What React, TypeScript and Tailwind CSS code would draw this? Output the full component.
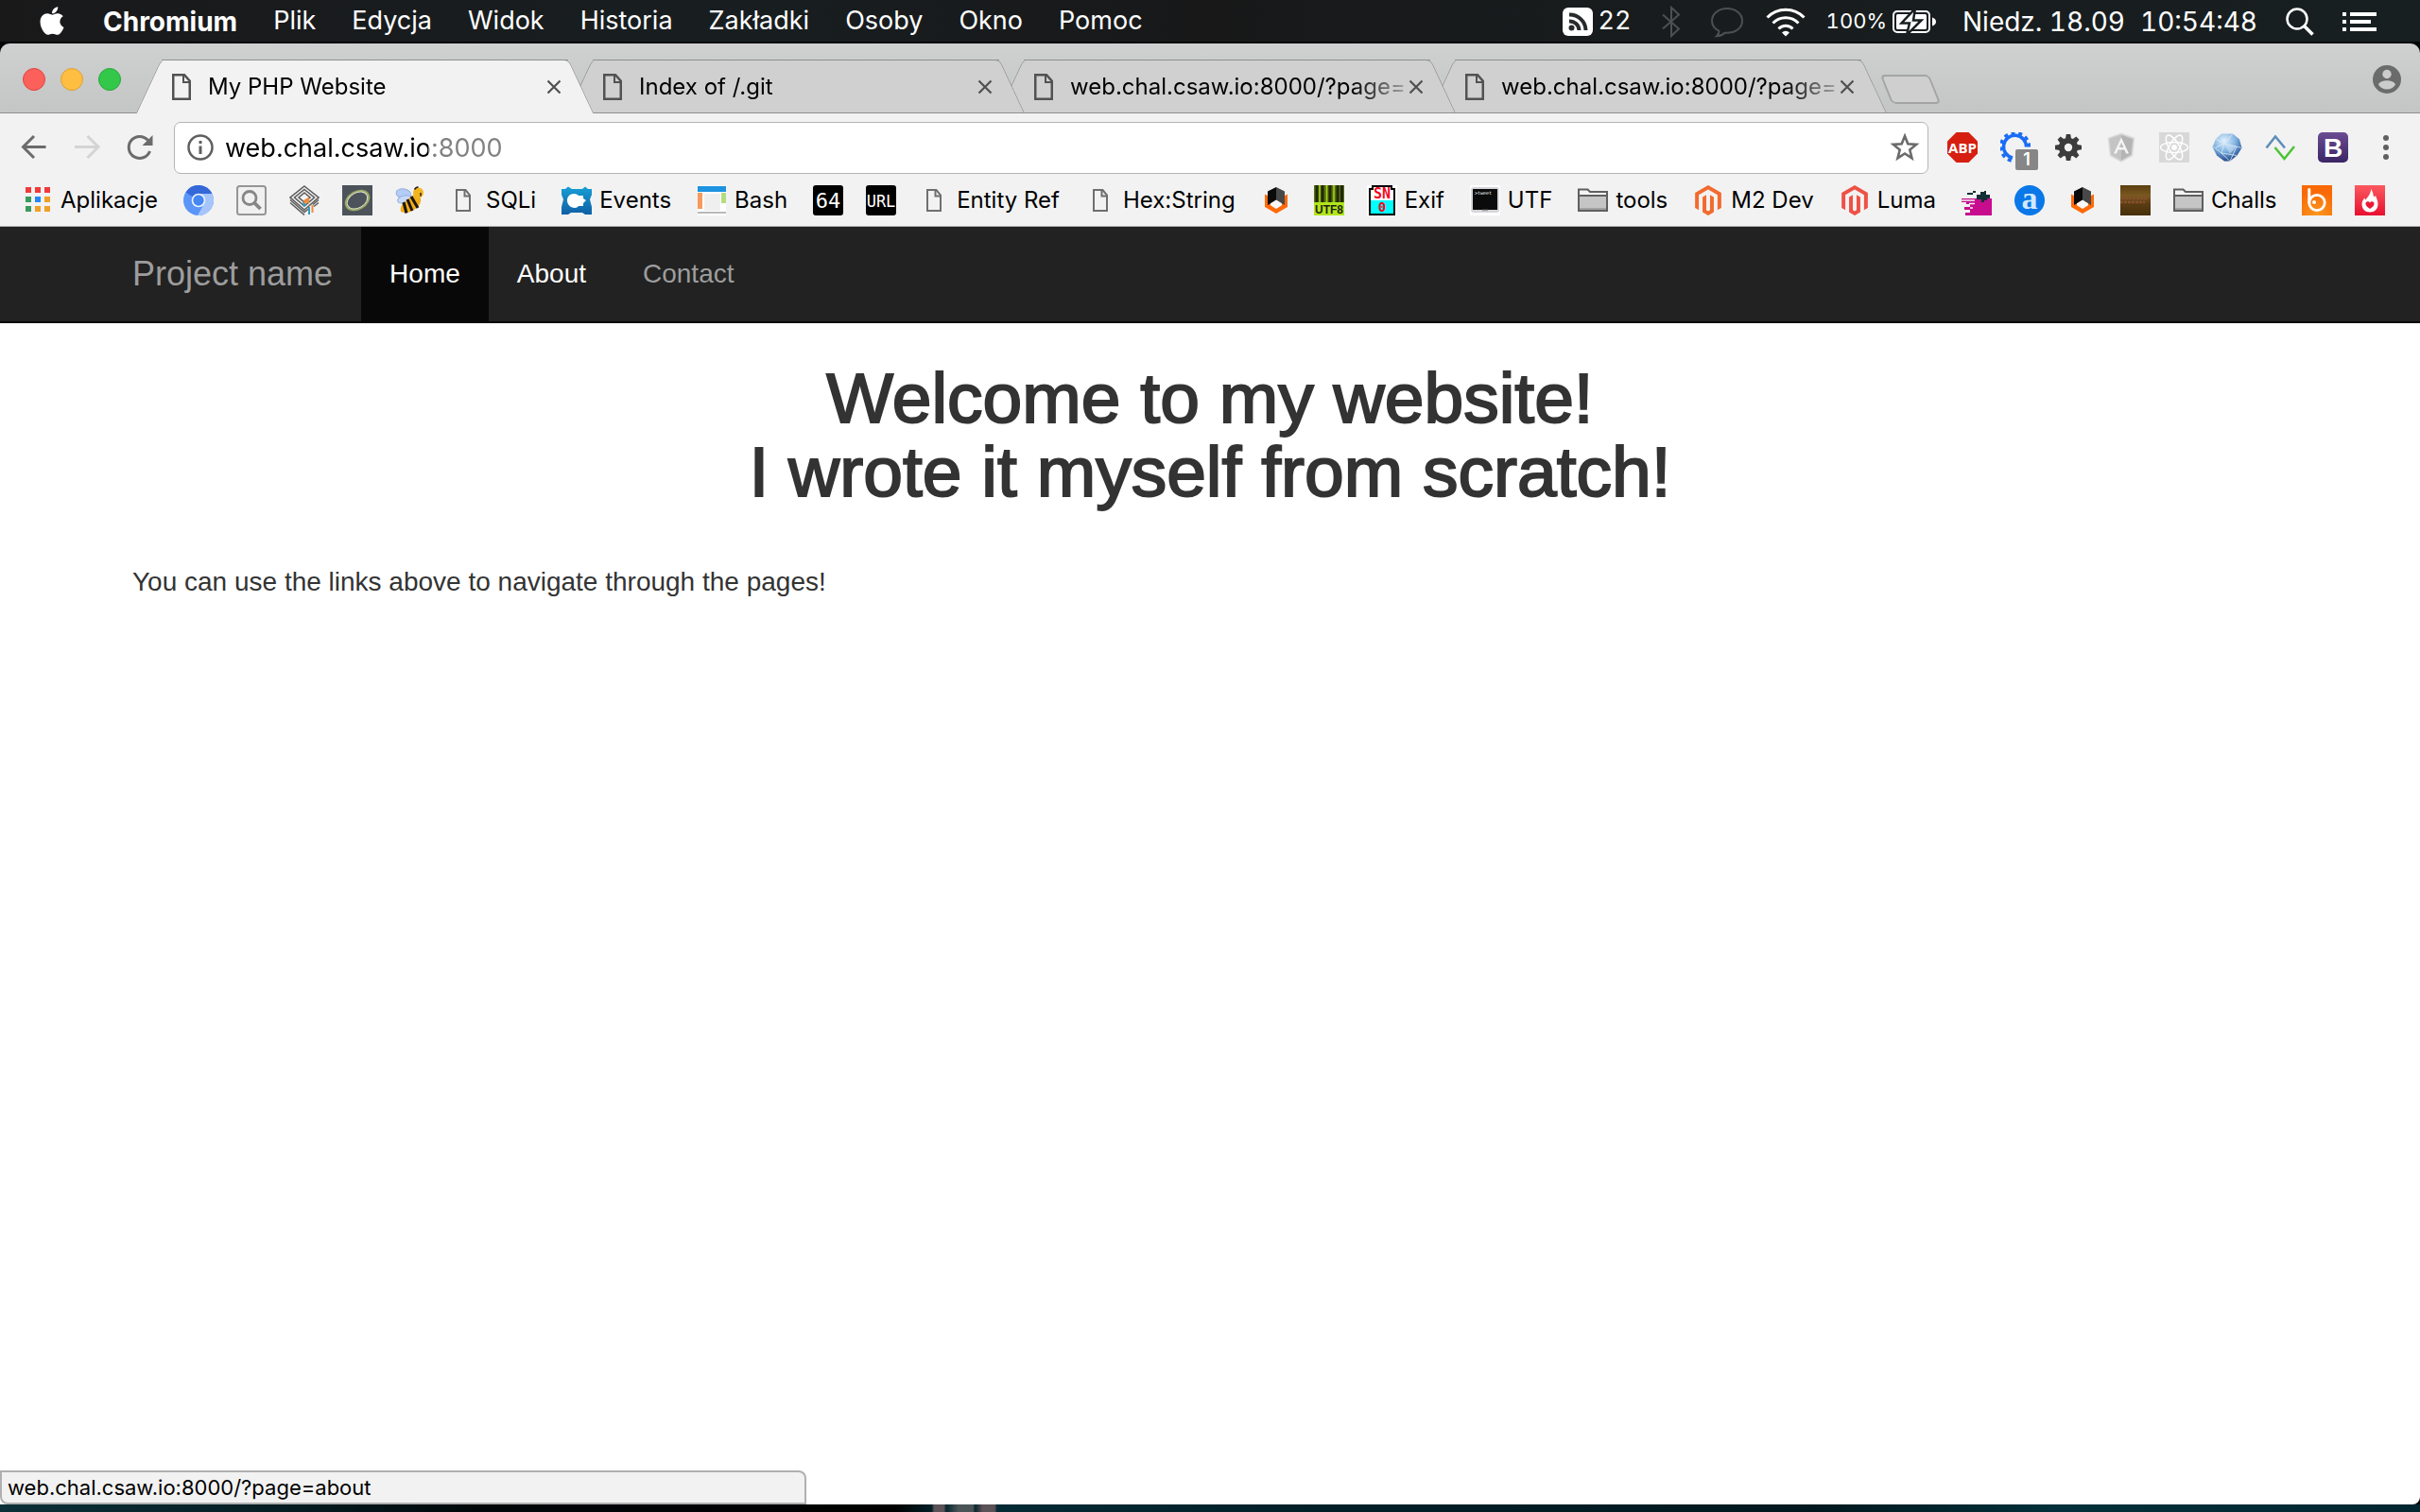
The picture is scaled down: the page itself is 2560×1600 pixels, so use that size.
import type { ReactNode } from "react";
import { FaApple, FaMagento } from "react-icons/fa";

const icon = "block size-8 shrink-0";

function Svg({ children, label }: { children: ReactNode; label?: string }) {
  return (
    <svg viewBox="0 0 32 32" className={icon} role={label ? "img" : undefined} aria-label={label} aria-hidden={label ? undefined : true}>
      {children}
    </svg>
  );
}

/* ---------- menu bar icons ---------- */

const RssIcon = () => (
  <Svg>
    <rect x="0" y="1" width="32" height="30" rx="6" fill="#fff" />
    <g fill="none" stroke="#262b2c" strokeWidth="4">
      <path d="M7 8.500a17 17 0 0 1 17.500 16.500" />
      <path d="M7 15.500a10 10 0 0 1 10.500 9.500" />
    </g>
    <circle cx="9.500" cy="22.500" r="3" fill="#262b2c" />
  </Svg>
);

const BluetoothIcon = () => (
  <svg viewBox="0 0 20 34" className="block h-[34px] w-5 shrink-0" aria-hidden>
    <path d="M1 9.500 18 24.500 10 32V2l8 7.500L1 24.500" fill="none" stroke="#4b5152" strokeWidth="2" />
  </svg>
);

const BubbleIcon = () => (
  <svg viewBox="0 0 34 34" className="block size-[34px] shrink-0" aria-hidden>
    <path
      d="M17 3C8 3 1 8.500 1 16c0 5 3 8.500 7.500 10.800 0 2-1 4-2.500 5.500 3.500-.3 6.500-1.500 8.500-3.600 10.500 1 18.500-4.700 18.500-12.700C33 8.500 26 3 17 3Z"
      fill="none"
      stroke="#4b5152"
      strokeWidth="2"
    />
  </svg>
);

const WifiIcon = () => (
  <svg viewBox="0 0 42 32" className="block h-8 w-[42px] shrink-0" aria-hidden>
    <g fill="none" stroke="#fff" strokeWidth="3">
      <path d="M1.500 11.500a27 27 0 0 1 39 0" />
      <path d="M7.500 17.500a19 19 0 0 1 27 0" />
      <path d="M13.500 23.500a10.500 10.500 0 0 1 15 0" />
    </g>
    <path d="M21 31.500 17 27.500a5.600 5.600 0 0 1 8 0Z" fill="#fff" />
  </svg>
);

const BatteryIcon = () => (
  <svg viewBox="0 0 46 26" className="block h-[26px] w-[46px] shrink-0" aria-hidden>
    <rect x="1" y="2" width="38" height="22" rx="4" fill="none" stroke="#fff" strokeWidth="2" />
    <path d="M42 8.500c2.500.6 4 2.500 4 4.500s-1.500 3.900-4 4.500Z" fill="#fff" />
    <rect x="4" y="5" width="32" height="16" rx="1.500" fill="#fff" />
    <path d="M24-1 9.500 14.500H18L15 27l15.500-15.500H22Z" fill="#fff" stroke="#181f20" strokeWidth="2.500" />
  </svg>
);

const SpotlightIcon = () => (
  <svg viewBox="0 0 30 30" className="block size-[30px] shrink-0" aria-hidden>
    <circle cx="12" cy="12" r="10.500" fill="none" stroke="#fff" strokeWidth="2.500" />
    <path d="m19.500 19.500 9 9" stroke="#fff" strokeWidth="3.500" />
  </svg>
);

const ListIcon = () => (
  <svg viewBox="0 0 36 20" className="block h-5 w-9 shrink-0" aria-hidden>
    <g fill="#fff">
      <rect width="4" height="4" />
      <rect y="8" width="4" height="4" />
      <rect y="16" width="4" height="4" />
      <rect x="8" width="28" height="4" />
      <rect x="8" y="8" width="22" height="4" />
      <rect x="8" y="16" width="28" height="4" />
    </g>
  </svg>
);

/* ---------- browser chrome icons ---------- */

const TabFileIcon = () => (
  <svg viewBox="0 0 20 28" className="block h-7 w-5 shrink-0" aria-hidden>
    <path d="M1.250 1.250H13l5.750 6.500v19H1.250Z" fill="none" stroke="#525252" strokeWidth="2.500" />
    <path d="M12 1v8h7" fill="none" stroke="#525252" strokeWidth="2" />
  </svg>
);

const CloseIcon = () => (
  <svg viewBox="0 0 16 16" className="block size-4" aria-hidden>
    <path d="m1.500 1.500 13 13m0-13-13 13" stroke="#505050" strokeWidth="2.200" />
  </svg>
);

const ArrowIcon = ({ flip }: { flip?: boolean }) => (
  <Svg>
    {flip ? (
      <path d="M3 15.500h24M16.500 4l11.500 11.500L16.500 27" fill="none" stroke="#d4d4d4" strokeWidth="3" />
    ) : (
      <path d="M28.500 15.500h-24M16 4 4.500 15.500 16 27" fill="none" stroke="#6b6b6b" strokeWidth="3" />
    )}
  </Svg>
);

const ReloadIcon = () => (
  <Svg>
    <path d="M26.500 20A11.500 11.500 0 1 1 24.500 8.500" fill="none" stroke="#6b6b6b" strokeWidth="3" />
    <path d="M29.500 3v11h-11Z" fill="#6b6b6b" />
  </Svg>
);

const InfoIcon = () => (
  <svg viewBox="0 0 28 28" className="block size-7 shrink-0" aria-hidden>
    <circle cx="14" cy="14" r="12.500" fill="none" stroke="#5f5f5f" strokeWidth="2.500" />
    <path d="M12.500 7h3v3h-3zM12.500 12.500h3v8.500h-3z" fill="#5f5f5f" />
  </svg>
);

const StarIcon = () => (
  <Svg>
    <path d="m16 4 3.300 8.300 8.900.6-6.900 5.700 2.200 8.700L16 22.500l-7.500 4.800 2.200-8.700-6.900-5.700 8.900-.6Z" fill="none" stroke="#6b6b6b" strokeWidth="2.600" />
  </Svg>
);

const ProfileIcon = () => (
  <svg viewBox="0 0 30 30" className="block size-[30px]" aria-hidden>
    <circle cx="15" cy="15" r="15" fill="#6b6b6b" />
    <circle cx="15" cy="9.500" r="4.700" fill="#cbcccc" />
    <path d="M6 20.500c1-3 5.500-4.300 9-4.300s8 1.300 9 4.300a10.500 10.500 0 0 1-18 0Z" fill="#cbcccc" />
  </svg>
);

/* ---------- extension icons ---------- */

const AbpIcon = () => (
  <Svg>
    <path d="M9.500 0h13L32 9.500v13L22.500 32h-13L0 22.500v-13Z" fill="#d61f10" />
    <text x="16" y="21.500" textAnchor="middle" fontFamily="Open Sans" fontWeight="700" fontSize="15" fill="#fff">ABP</text>
  </Svg>
);

const BlueGearIcon = () => (
  <Svg>
    <path d="M27.500 15.500A12 12 0 1 0 13 27" fill="none" stroke="#1a6cf5" strokeWidth="3.500" />
    <path d="M30.500 15.500A15 15 0 1 0 13 30.300" fill="none" stroke="#1a6cf5" strokeWidth="3.500" strokeDasharray="4 3.800" />
  </Svg>
);

const DarkGearIcon = () => (
  <Svg>
    <g fill="#3c3c3c">
      {[0, 45, 90, 135, 180, 225, 270, 315].map((a) => (
        <path key={a} d="M12.800 8 13.800 2h4.400l1 6Z" transform={`rotate(${a} 16 16)`} />
      ))}
    </g>
    <circle cx="16" cy="16" r="7.200" fill="none" stroke="#3c3c3c" strokeWidth="6" />
  </Svg>
);

const AngularIcon = () => (
  <Svg>
    <path d="m16 1.500 13.500 4.800-2 18.200L16 31 4.500 24.500l-2-18.200Z" fill="#c4c4c4" stroke="#dadada" strokeWidth="1.500" />
    <path d="m16 3 12 4.300-1.900 16.300L16 29.500Z" fill="#b4b4b4" />
    <path d="m16 5.500-8 17h3l1.600-4h6.800l1.600 4h3Zm0 5.500 2.400 5h-4.800Z" fill="#f4f4f4" />
  </Svg>
);

const ReactIcon = () => (
  <Svg>
    <rect width="32" height="32" fill="#d8d8d8" />
    <g fill="none" stroke="#fff" strokeWidth="1.500">
      {[0, 60, 120].map((a) => (
        <ellipse key={a} cx="16" cy="16" rx="14.500" ry="5.500" transform={`rotate(${a} 16 16)`} />
      ))}
    </g>
    <circle cx="16" cy="16" r="3" fill="#fff" />
  </Svg>
);

const CrystalIcon = () => (
  <Svg>
    <defs>
      <radialGradient id="crystal" cx="0.400" cy="0.250" r="0.800">
        <stop offset="0" stopColor="#e3f1fc" />
        <stop offset="0.500" stopColor="#7fb2e0" />
        <stop offset="1" stopColor="#14397f" />
      </radialGradient>
    </defs>
    <path d="M10 1.500h12l7 6 2.500 9-5 8L19 30.500h-6l-8-6-4.500-9L4 7Z" fill="url(#crystal)" />
    <path d="m4 7 9 5 9-10.500M13 12l-3 10-9-7m12-3 13 3 5 1.500M13 12 4 16m6 6 9 8.500L26 15M10 22l16 2.500" fill="none" stroke="#dcecfa" strokeWidth="0.800" />
    <path d="m13 12 13 3-7 8Z" fill="#cfe4f7" opacity="0.550" />
  </Svg>
);

const ZigzagIcon = () => (
  <Svg>
    <path d="m1.500 16.500 9.500-12 10 12" fill="none" stroke="#5b8db8" strokeWidth="2.500" />
    <path d="m10.500 16 10 12 10.500-13" fill="none" stroke="#4cc337" strokeWidth="2.500" />
  </Svg>
);

const BootstrapIcon = () => (
  <Svg>
    <defs>
      <linearGradient id="boot" x1="0" y1="0" x2="0" y2="1">
        <stop offset="0" stopColor="#6a4c93" />
        <stop offset="1" stopColor="#3b2564" />
      </linearGradient>
    </defs>
    <rect width="32" height="32" rx="5" fill="url(#boot)" />
    <text x="16" y="26" textAnchor="middle" fontFamily="Liberation Sans" fontWeight="700" fontSize="28" fill="#fff">B</text>
  </Svg>
);

const KebabIcon = () => (
  <Svg>
    <g fill="#606060">
      <circle cx="16" cy="6" r="3" />
      <circle cx="16" cy="16" r="3" />
      <circle cx="16" cy="26" r="3" />
    </g>
  </Svg>
);

/* ---------- bookmark icons ---------- */

const AppsIcon = () => (
  <Svg>
    {[
      ["#f23a3a", "#f23a3a", "#f23a3a"],
      ["#3a9b5c", "#2389f5", "#f0a028"],
      ["#3a9b5c", "#f0a028", "#f0a028"],
    ].map((row, y) => row.map((c, x) => <rect key={`${x}${y}`} x={3 + x * 10} y={2 + y * 10} width="6" height="6" fill={c} />))}
  </Svg>
);

const ChromiumIcon = () => (
  <Svg>
    <circle cx="16" cy="16" r="16" fill="#5b95f7" />
    <path d="M16 16 2.500 7.500a16 16 0 0 1 28.200 2.200L16 9Z" fill="#3468d8" />
    <path d="M16 9h14.400A16 16 0 0 1 15 32l7-12.500Z" fill="#a6c5fb" />
    <circle cx="16" cy="16" r="7.300" fill="#eef4fe" />
    <circle cx="16" cy="16" r="5.700" fill="#4587f3" />
  </Svg>
);

const SearchBoxIcon = () => (
  <Svg>
    <rect x="1" y="1" width="30" height="30" rx="2.500" fill="#f0f0f0" stroke="#959595" strokeWidth="2" />
    <circle cx="14" cy="13.500" r="7" fill="none" stroke="#858585" strokeWidth="2.800" />
    <path d="m19 18.500 6.500 6.500" stroke="#858585" strokeWidth="3.800" />
  </Svg>
);

const LayersIcon = () => (
  <Svg>
    <g fill="none" stroke="#5d5d5d" strokeWidth="1.600">
      <path d="M16 1 31 13 16 26 1 13Z" />
      <path d="M16 4.500 26.500 13 16 22 5.500 13Z" />
      <path d="M16 8 22 13l-6 5-6-5Z" />
      <path d="M1 15.500 16 28.500l5-4M1 18.500 16 31.500M31 15.500l-6 5M31 18.500l-5 4" />
    </g>
    <path d="m15 16 6-3.500v7.500l-2-2-3 3Z" fill="#f08a3c" />
    <path d="m14 17 4 4-3 2Z" fill="#2d9fc0" />
    <path d="M21 23v8" stroke="#2d9fc0" strokeWidth="2" />
    <path d="M24.500 21v8" stroke="#f08a3c" strokeWidth="2" />
  </Svg>
);

const RingIcon = () => (
  <Svg>
    <rect width="32" height="32" fill="#4d535a" />
    <g fill="none" transform="rotate(-30 16 16)">
      <ellipse cx="16" cy="16" rx="13" ry="9" stroke="#9aa868" strokeWidth="2.200" />
      <ellipse cx="16" cy="16" rx="11.500" ry="8" stroke="#dfe3cf" strokeWidth="0.900" />
    </g>
  </Svg>
);

const BeeIcon = () => (
  <Svg>
    <ellipse cx="9" cy="9" rx="8" ry="5" fill="#b3cdf8" stroke="#93aede" transform="rotate(12 9 9)" />
    <ellipse cx="10" cy="15" rx="7.500" ry="4" fill="#c6daf9" stroke="#93aede" transform="rotate(-12 10 15)" />
    <path d="M17 12c3-3 8-2 10 2 1 4-2 9-7 12-4 3-10 4-14 2-1-4 1-8 4-10Z" fill="#efad1d" />
    <path d="m17 12 7 12M13 15l5 12M9 18l3 11.500" stroke="#1d1608" strokeWidth="3" />
    <circle cx="24.500" cy="8" r="5.500" fill="#f3b51f" />
    <path d="M20.500 4.500c2-3 3.500-2.500 4-2M27 8v3.500" fill="none" stroke="#2a1f0a" strokeWidth="1.500" />
  </Svg>
);

const FileIcon = () => (
  <Svg>
    <path d="M5 5h9.500L19 10.500V27H5Z" fill="none" stroke="#6f6f6f" strokeWidth="2" transform="translate(4 0)" />
    <path d="M17.500 5v6.500H23" fill="none" stroke="#6f6f6f" strokeWidth="2" />
  </Svg>
);

const EventsIcon = () => (
  <Svg>
    <defs>
      <linearGradient id="events" x1="0" y1="0" x2="0" y2="1">
        <stop offset="0" stopColor="#179fd6" />
        <stop offset="1" stopColor="#0f5fa5" />
      </linearGradient>
    </defs>
    <path d="M0 4h4l3-2.500L11 4h11l3-2.500L28 4h4v6l-2 5 2 8v8h-7l-3-2H10l-3 2H0v-8l2-8-2-5Z" fill="url(#events)" />
    <path d="M6 16c0-4 3-7 7-7 3 0 4 1 5 2h5v3l3 2-3 3v3h-5c-1 1-2 2-4 2-5 0-8-4-8-8Z" fill="#fff" />
  </Svg>
);

const BashIcon = () => (
  <Svg>
    <rect x="1" width="30" height="32" fill="#fff" />
    <rect x="1" y="1" width="30" height="6" fill="#1e93e0" />
    <rect x="1" y="8" width="5" height="17" fill="#f79a5e" />
    <rect x="8" y="9" width="17" height="18" fill="#efefef" />
    <rect x="26" y="8" width="5" height="11" fill="#b5dc80" />
    <rect x="1" y="28" width="30" height="2" fill="#b9b9b9" />
  </Svg>
);

const Base64Icon = () => (
  <Svg>
    <rect width="32" height="32" rx="3" fill="#000" />
    <text x="16" y="24" textAnchor="middle" fontFamily="DejaVu Sans Mono" fontSize="22" fill="#fff">64</text>
  </Svg>
);

const UrlIcon = () => (
  <Svg>
    <rect width="32" height="32" rx="3" fill="#000" />
    <text x="16" y="22.500" textAnchor="middle" fontFamily="DejaVu Sans Mono" fontSize="17" fill="#fff">URL</text>
  </Svg>
);

const CubeIcon = () => (
  <Svg>
    <path d="M4 9.500 16 16l12-6.500V23L16 30 4 23Z" fill="#ff6a08" />
    <path d="M7 6.500 16 2v14l-9 5Z" fill="#0a0a0a" />
    <path d="M25 6.500 16 2v14l9 5Z" fill="#484848" />
    <path d="m10 19.300 6-3.800 6 3.800v2L16 25l-6-3.700Z" fill="#f8f8f8" />
  </Svg>
);

const Utf8Icon = () => (
  <Svg>
    <rect width="32" height="32" fill="#b1e51d" />
    <rect width="32" height="18" fill="#59700f" />
    <path d="M3 0v18M9 0v18M17 0v18M25 0v18M29.500 0v18" stroke="#20280a" strokeWidth="3" />
    <path d="M6 0v18M13.500 0v18M21 0v18" stroke="#a4d31b" strokeWidth="1.500" />
    <text x="16" y="29.500" textAnchor="middle" fontFamily="Liberation Sans" fontWeight="700" fontSize="12" fill="#1c230a">UTF8</text>
  </Svg>
);

const SnoIcon = () => (
  <Svg>
    <rect width="32" height="32" fill="#fff" />
    <path d="M3 31V4h3V1h20v3h3v27Z" fill="#fff" stroke="#000" strokeWidth="2" />
    <rect x="4" y="16" width="24" height="14" fill="#0ff" />
    <g textAnchor="middle" fontFamily="DejaVu Sans Mono" fontWeight="700" fill="#f5081c">
      <text x="16" y="14" fontSize="15">SN</text>
      <text x="16" y="28" fontSize="14">0</text>
    </g>
  </Svg>
);

const TerminalIcon = () => (
  <Svg>
    <rect width="32" height="32" fill="#fff" />
    <rect x="1" y="2" width="30" height="27" rx="3" fill="#d5d5da" />
    <rect x="3" y="4" width="26" height="22" fill="#0b0b0b" />
    <path d="M13 26.500h6" stroke="#999" strokeWidth="1.500" />
    <text x="5" y="10" fontFamily="DejaVu Sans Mono" fontSize="5" fill="#fff">&gt;tweet</text>
  </Svg>
);

const FolderIcon = () => (
  <Svg>
    <path d="M1 10V4.500h9.500L13 7h18v3" fill="#f4f4f4" stroke="#5f5f5f" strokeWidth="2" />
    <rect x="1" y="11" width="30" height="16" fill="#c5c5c5" stroke="#5f5f5f" strokeWidth="2" />
    <path d="M2 25h28" stroke="#a3a3a3" strokeWidth="2" />
  </Svg>
);

const MagentoIcon = () => <FaMagento className="block size-8 shrink-0 text-[#f26a2e]" aria-hidden />;
const LumaIcon = () => <FaMagento className="block size-8 shrink-0 text-[#ee5145]" aria-hidden />;

const BerryIcon = () => (
  <Svg>
    <path d="M0 14h32v18H4v-3h5v-3H3v-3h6v-3H5v-2H0Z" fill="#c70d8e" />
    <path d="M0 16h14M8 19.500h6M12 24h-3" stroke="#f2f2f2" strokeWidth="1.500" />
    <path d="M16 10h4V7h4v3h6v4h-3v2h-3v2h-3v-3h-5ZM6 8h6V6h3v2h-3v2H6ZM24 6h2v4h-2Z" fill="#123036" />
  </Svg>
);

const AlphaIcon = () => (
  <Svg>
    <circle cx="16" cy="16" r="16" fill="#0a78e8" />
    <text x="16" y="25" textAnchor="middle" fontFamily="Liberation Serif" fontWeight="700" fontSize="34" fill="#d3e9ff">a</text>
  </Svg>
);

const BrownIcon = () => (
  <Svg>
    <defs>
      <linearGradient id="brown" x1="0" y1="0" x2="0" y2="1">
        <stop offset="0" stopColor="#5d4010" />
        <stop offset="0.350" stopColor="#7a5820" />
        <stop offset="0.600" stopColor="#5c3c14" />
        <stop offset="1" stopColor="#463009" />
      </linearGradient>
    </defs>
    <rect width="32" height="32" fill="url(#brown)" />
    <path d="M1 14h28M0 18h26" stroke="#85502c" strokeWidth="2.500" strokeDasharray="3 1" />
  </Svg>
);

const BitIcon = () => (
  <Svg>
    <defs>
      <radialGradient id="bit" cx="0.500" cy="1" r="0.800">
        <stop offset="0" stopColor="#fa9a20" />
        <stop offset="1" stopColor="#f96a06" />
      </radialGradient>
    </defs>
    <rect width="32" height="32" fill="url(#bit)" />
    <circle cx="16" cy="18.500" r="8.200" fill="none" stroke="#fff" strokeWidth="2.800" />
    <path d="M7.800 18.500v-14" stroke="#fff" strokeWidth="3" strokeLinecap="round" />
    <circle cx="13" cy="18" r="2" fill="#fff" />
  </Svg>
);

const FlameIcon = () => (
  <Svg>
    <defs>
      <linearGradient id="flame" x1="0" y1="0" x2="0" y2="1">
        <stop offset="0" stopColor="#fb5a5f" />
        <stop offset="1" stopColor="#e8102f" />
      </linearGradient>
    </defs>
    <rect width="32" height="32" fill="url(#flame)" />
    <path d="M17 4c3 4 2 6 3.500 8.500L22 11c1 3 2.500 5 2.500 9 0 5-3.500 8.500-8.500 8.500S7.500 25 7.500 20c0-3 1.500-5 3-6.500l1 2C14 12 17.500 8 17 4Z" fill="#fff" />
    <path d="M16 25c-3-2-4.500-3.500-4.500-5.500 0-2.500 3.500-3 4.500-.7 1-2.300 4.500-1.800 4.500.7 0 2-1.500 3.500-4.500 5.500Z" fill="#ea1835" />
  </Svg>
);

/* ---------- data ---------- */

const menus = ["Plik", "Edycja", "Widok", "Historia", "Zakładki", "Osoby", "Okno", "Pomoc"];

const tabs = [
  { id: 1, title: "My PHP Website", layer: "z-20", active: true },
  { id: 2, title: "Index of /.git", layer: "z-[3]" },
  { id: 3, title: "web.chal.csaw.io:8000/?page=", layer: "z-[2]" },
  { id: 4, title: "web.chal.csaw.io:8000/?page=", layer: "z-[1]" },
];

const extensions: [string, () => ReactNode][] = [
  ["Adblock Plus", AbpIcon],
  ["Rules", BlueGearIcon],
  ["Settings", DarkGearIcon],
  ["Angular", AngularIcon],
  ["React", ReactIcon],
  ["Crystal", CrystalIcon],
  ["Zigzag", ZigzagIcon],
  ["Bootstrap", BootstrapIcon],
  ["Menu", KebabIcon],
];

const bookmarks: { Icon: () => ReactNode; label?: string; name?: string }[] = [
  { Icon: AppsIcon, label: "Aplikacje" },
  { Icon: ChromiumIcon, name: "Chromium" },
  { Icon: SearchBoxIcon, name: "Search" },
  { Icon: LayersIcon, name: "Layers" },
  { Icon: RingIcon, name: "Ring" },
  { Icon: BeeIcon, name: "Bee" },
  { Icon: FileIcon, label: "SQLi" },
  { Icon: EventsIcon, label: "Events" },
  { Icon: BashIcon, label: "Bash" },
  { Icon: Base64Icon, name: "Base64" },
  { Icon: UrlIcon, name: "URL" },
  { Icon: FileIcon, label: "Entity Ref" },
  { Icon: FileIcon, label: "Hex:String" },
  { Icon: CubeIcon, name: "Cube" },
  { Icon: Utf8Icon, name: "UTF8" },
  { Icon: SnoIcon, label: "Exif" },
  { Icon: TerminalIcon, label: "UTF" },
  { Icon: FolderIcon, label: "tools" },
  { Icon: MagentoIcon, label: "M2 Dev" },
  { Icon: LumaIcon, label: "Luma" },
  { Icon: BerryIcon, name: "Berry" },
  { Icon: AlphaIcon, name: "Alpha" },
  { Icon: CubeIcon, name: "Cube" },
  { Icon: BrownIcon, name: "Wood" },
  { Icon: FolderIcon, label: "Challs" },
  { Icon: BitIcon, name: "Bit" },
  { Icon: FlameIcon, name: "Flame" },
];

/* ---------- sections ---------- */

function MenuBar() {
  return (
    <header className="flex h-[46px] shrink-0 items-center justify-between border-b-2 border-[#020507] bg-[linear-gradient(to_right,#19191a,#181e20_30%,#181819_50%,#181b1c_60%,#181f21)] pt-px pr-[46px] pl-[38px] text-[27px] whitespace-nowrap text-white">
      <nav className="flex items-center">
        <button aria-label="Apple" className="mr-[37px]">
          <FaApple className="mb-0.5 size-[34px]" />
        </button>
        <button className="text-[28px] font-bold">Chromium</button>
        {menus.map((m) => (
          <button key={m} className="ml-[38px]">{m}</button>
        ))}
      </nav>
      <div className="flex items-center tabular-nums">
        <RssIcon />
        <span className="ml-[6px]">22</span>
        <span className="ml-8"><BluetoothIcon /></span>
        <span className="ml-8"><BubbleIcon /></span>
        <span className="ml-6"><WifiIcon /></span>
        <span className="ml-[22px] text-[22px]">100%</span>
        <span className="ml-[6px]"><BatteryIcon /></span>
        <span className="ml-7 text-[28px]">Niedz. 18.09</span>
        <span className="ml-4 text-[28px]">10:54:48</span>
        <button aria-label="Spotlight" className="ml-[30px]"><SpotlightIcon /></button>
        <button aria-label="Notifications" className="ml-[30px]"><ListIcon /></button>
      </div>
    </header>
  );
}

function Tab({ title, layer, active }: { title: string; layer: string; active?: boolean }) {
  const fill = active ? "bg-[#f2f2f2]" : "bg-[#d0d0d0]";
  return (
    <div className={`relative -mr-7 flex h-[57px] w-[484px] shrink items-center pr-[34px] pl-[38px] ${layer}`}>
      <span className={`absolute inset-y-0 right-10 left-[13px] skew-x-[-25deg] rounded-tl-md border-t border-l border-[#8f8f8f] ${fill}`} />
      <span className={`absolute inset-y-0 right-[13px] left-10 skew-x-[25deg] rounded-tr-md border-t border-r border-[#8f8f8f] ${fill}`} />
      <button className="relative flex min-w-0 flex-1 items-center gap-[18px] text-left text-[24px] text-black">
        <TabFileIcon />
        <span className="flex-1 mask-r-from-[84%] mask-r-to-[104%] whitespace-nowrap">{title}</span>
      </button>
      <button aria-label="Close tab" className="relative ml-2">
        <CloseIcon />
      </button>
    </div>
  );
}

function TabStrip() {
  return (
    <div className="relative isolate flex h-[74px] shrink-0 items-end rounded-t-[10px] bg-[linear-gradient(to_bottom,#cfd0d0,#c4c5c5)] pr-5">
      <div className="flex h-full w-36 shrink-0 items-center gap-4 pt-0.5 pl-6">
        <button aria-label="Close" className="size-6 rounded-full border border-[#e0443e] bg-[#fc605b]" />
        <button aria-label="Minimize" className="size-6 rounded-full border border-[#dea034] bg-[#fdbe41]" />
        <button aria-label="Zoom" className="size-6 rounded-full border border-[#27a83a] bg-[#34c84a]" />
      </div>
      {tabs.map((t) => (
        <Tab key={t.id} title={t.title} layer={t.layer} active={t.active} />
      ))}
      <button aria-label="New tab" className="mb-[10px] ml-[27px] h-[31px] w-[52px] shrink-0 skew-x-[22deg] rounded-[5px] border-2 border-[#a3a4a4] bg-[#cfcfcf]" />
      <button aria-label="Profile" className="mb-[21px] ml-auto">
        <ProfileIcon />
      </button>
      <span className="absolute inset-x-0 bottom-0 z-10 h-px bg-[#8f8f8f]" />
    </div>
  );
}

function Toolbar() {
  return (
    <div className="flex h-[72px] shrink-0 items-center bg-[#f2f2f2] px-5">
      <div className="flex gap-6">
        <button aria-label="Back"><ArrowIcon /></button>
        <button aria-label="Forward" disabled><ArrowIcon flip /></button>
        <button aria-label="Reload"><ReloadIcon /></button>
      </div>
      <div className="mx-5 flex h-[55px] flex-1 items-center gap-3 rounded-[7px] border border-[#b4b4b4] bg-white pr-2 pl-[13px]">
        <InfoIcon />
        <input
          aria-label="Address"
          defaultValue="web.chal.csaw.io:8000"
          className="min-w-0 flex-1 bg-[linear-gradient(to_right,#000_215px,#808080_215px)] bg-clip-text pt-0.5 text-[27px] text-transparent outline-none"
        />
        <button aria-label="Bookmark this page"><StarIcon /></button>
      </div>
      <div className="flex gap-6">
        {extensions.map(([name, Icon]) => (
          <button key={name} aria-label={name} className="relative">
            <Icon />
            {name === "Rules" && (
              <span className="absolute top-[18px] left-4 h-[22px] w-6 rounded-[2px] bg-[#868686] text-[18px] leading-[22px] font-semibold text-white">1</span>
            )}
          </button>
        ))}
      </div>
    </div>
  );
}

function BookmarksBar() {
  return (
    <nav aria-label="Bookmarks" className="flex h-12 shrink-0 items-center gap-6 border-b border-[#b4b4b4] bg-[#f2f2f2] px-6 pb-2">
      {bookmarks.map(({ Icon, label, name }, i) => (
        <a key={i} href="#" aria-label={label ?? name} className="flex shrink-0 items-center gap-2 text-[24px] leading-8 whitespace-nowrap text-black">
          <Icon />
          {label && <span className="pr-[3px]">{label}</span>}
        </a>
      ))}
    </nav>
  );
}

function Page() {
  return (
    <main className="relative flex-1 rounded-br-lg bg-white font-['Liberation_Sans',Arial,sans-serif] text-[28px] text-[#333]">
      <nav className="border-b-2 border-[#080808] bg-[#222]">
        <div className="mx-auto flex max-w-[2340px] items-center leading-[100px] text-[#9d9d9d]">
          <a href="#" className="px-[30px] text-[36px]">Project name</a>
          <a href="#" className="bg-[#080808] px-[30px] text-white">Home</a>
          <a href="#" className="px-[30px] text-white">About</a>
          <a href="#" className="px-[30px]">Contact</a>
        </div>
      </nav>
      <div className="mx-auto max-w-[2340px] px-[30px]">
        <h1 className="mt-10 text-center text-[75px] leading-[78px] [-webkit-text-stroke:2px_#333]">
          Welcome to my website!
          <br />
          I wrote it myself from scratch!
        </h1>
        <p className="mt-[58px] leading-10">You can use the links above to navigate through the pages!</p>
      </div>
      <div className="absolute bottom-0 left-0 h-9 w-1/3 rounded-tr-lg rounded-bl-lg border-2 border-[#b0b0b0] bg-[#f2f2f2] pl-1.5 font-[Inter,sans-serif] text-[22px] leading-8 text-black">
        web.chal.csaw.io:8000/?page=about
      </div>
    </main>
  );
}

export default function App() {
  return (
    <div className="flex min-h-screen flex-col bg-[#020507] font-[Inter,sans-serif]">
      <MenuBar />
      <TabStrip />
      <Toolbar />
      <BookmarksBar />
      <Page />
      <div className="h-2 shrink-0 bg-[linear-gradient(to_right,#0b3038,#051d22_12%,#010608_20%,#000_37%,#021f27_38.500%,#5a5256_38.600%,#5a5256_39%,#08252c_39.100%,#4a5456_39.600%,#4a5456_40.200%,#08252c_40.300%,#5a5256_40.600%,#5a5256_41.100%,#042a34_41.200%,#021f27_55%,#01181e_75%,#03303a_85%,#022630)]" />
    </div>
  );
}
